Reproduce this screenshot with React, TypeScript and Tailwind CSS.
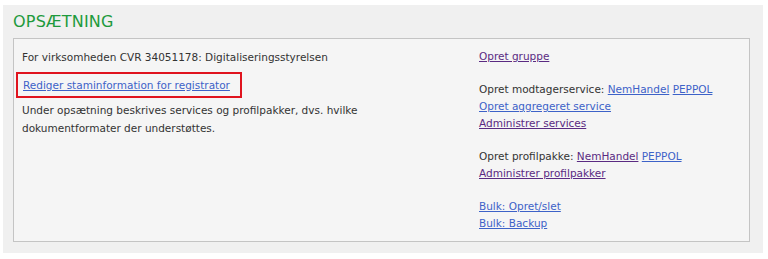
import React from "react";

const font = { fontFamily: '"DejaVu Sans", Verdana, sans-serif' };

function L({ children, visited }: { children: React.ReactNode; visited?: boolean }) {
  return (
    <a
      href="#"
      className={visited ? "text-[#5a2a82] underline" : "text-[#3d62c8] underline"}
    >
      {children}
    </a>
  );
}

export default function App() {
  return (
    <div className="w-[768px] h-[259px] bg-white pt-[5px] pl-[3px]" style={font}>
      <div className="w-[760px] h-[248px] bg-[#f0f0f0] pl-[10px] pr-[13px] flex flex-col">
        <div className="h-[33px] flex items-center">
          <h1 className="text-[#1e9a3c] text-[16px] leading-none tracking-[0.2px]">OPSÆTNING</h1>
        </div>
        <div className="h-[204px] border border-[#c4c4c4] bg-[#f5f5f5] flex text-[10.5px] text-[#333333]">
          <div className="w-[465px] pl-[8px] pt-[10px] pr-[8px]">
            <div className="leading-[17px] whitespace-nowrap">For virksomheden CVR 34051178: Digitaliseringsstyrelsen</div>
            <div className="mt-[6px] ml-[-6px] w-[226px] h-[26px] border-2 border-[#e0141e] flex items-center pl-[5px] leading-[17px] whitespace-nowrap">
              <L>Rediger staminformation for registrator</L>
            </div>
            <div className="mt-[3px] leading-[18px]">
              Under opsætning beskrives services og profilpakker, dvs. hvilke
              <br />
              dokumentformater der understøttes.
            </div>
          </div>
          <div className="pt-[9px] leading-[17px] flex flex-col whitespace-nowrap">
            <div><L visited>Opret gruppe</L></div>
            <div className="h-[16px]" />
            <div>
              Opret modtagerservice: <L>NemHandel</L> <L>PEPPOL</L>
            </div>
            <div><L>Opret aggregeret service</L></div>
            <div><L visited>Administrer services</L></div>
            <div className="h-[16px]" />
            <div>
              Opret profilpakke: <L visited>NemHandel</L> <L>PEPPOL</L>
            </div>
            <div><L visited>Administrer profilpakker</L></div>
            <div className="h-[16px]" />
            <div><L>Bulk: Opret/slet</L></div>
            <div><L>Bulk: Backup</L></div>
          </div>
        </div>
      </div>
    </div>
  );
}
